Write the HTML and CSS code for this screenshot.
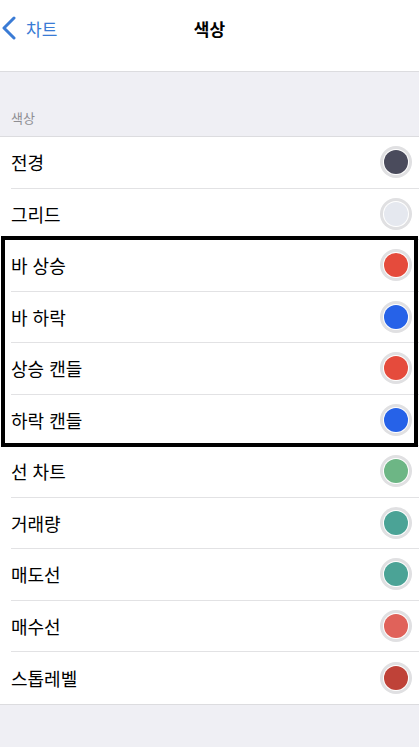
FILE: index.html
```html
<!DOCTYPE html>
<html lang="ko">
<head>
  <meta charset="UTF-8" />
  <meta name="viewport" content="width=device-width, initial-scale=1.0"/>
  <title>색상</title>
  <link rel="stylesheet" href="styles.css">
</head>
<body>
  <header class="navbar">
    <div class="nav-row">
      <a class="back-btn" href="#">
        <svg class="chevron" width="14" height="24" viewBox="0 0 14 24">
          <path d="M12 2 L2 12 L12 22" fill="none" stroke="#3a7bd5" stroke-width="3" stroke-linecap="round" stroke-linejoin="round"/>
        </svg>
        <span>차트</span>
      </a>
      <h1 class="title">색상</h1>
    </div>
  </header>

  <div class="section-label">색상</div>

  <ul class="list">
    <li class="row"><span>전경</span><i class="swatch" style="background:#4a4b5c"></i></li>
    <li class="row"><span>그리드</span><i class="swatch" style="background:#e5e8ef"></i></li>
    <li class="highlight">
      <ul class="list-group">
        <li class="row"><span>바 상승</span><i class="swatch" style="background:#e54b3c"></i></li>
        <li class="row"><span>바 하락</span><i class="swatch" style="background:#2662e8"></i></li>
        <li class="row"><span>상승 캔들</span><i class="swatch" style="background:#e54b3c"></i></li>
        <li class="row"><span>하락 캔들</span><i class="swatch" style="background:#2662e8"></i></li>
      </ul>
    </li>
    <li class="row"><span>선 차트</span><i class="swatch" style="background:#6db685"></i></li>
    <li class="row"><span>거래량</span><i class="swatch" style="background:#4ba396"></i></li>
    <li class="row"><span>매도선</span><i class="swatch" style="background:#4ba396"></i></li>
    <li class="row"><span>매수선</span><i class="swatch" style="background:#e0625a"></i></li>
    <li class="row"><span>스톱레벨</span><i class="swatch" style="background:#bf4238"></i></li>
  </ul>
</body>
</html>
```

FILE: styles.css
```css
body {
  margin: 0;
  background-color: #efeff4;
  font-family: "Noto Sans CJK KR", "Noto Sans", sans-serif;
  color: #000;
}

.navbar {
  background-color: #fff;
  height: 71px;
  border-bottom: 1px solid #dcdcdf;
}

.nav-row {
  position: relative;
  height: 56px;
  display: flex;
  align-items: center;
  justify-content: center;
}

.back-btn {
  position: absolute;
  left: 2px;
  top: 0;
  height: 56px;
  display: flex;
  align-items: center;
  gap: 10px;
  color: #3a7bd5;
  text-decoration: none;
  font-size: 17px;
}

.chevron {
  display: block;
}

.title {
  margin: 0;
  font-size: 17px;
  font-weight: 700;
}

.section-label {
  height: 64px;
  box-sizing: border-box;
  padding: 0 0 9px 11px;
  display: flex;
  align-items: flex-end;
  font-size: 13px;
  color: #8e8e93;
}

.list, .list-group {
  list-style: none;
  margin: 0;
  padding: 0;
}

.list {
  background-color: #fff;
  border-top: 1px solid #dcdcdf;
  border-bottom: 1px solid #dcdcdf;
}

.row {
  height: 51.5px;
  box-sizing: border-box;
  margin-left: 11px;
  padding-right: 11px;
  display: flex;
  align-items: center;
  justify-content: space-between;
  font-size: 18px;
  border-bottom: 1px solid #e2e2e4;
}

.list > .row:last-child {
  border-bottom: none;
}

.highlight {
  position: relative;
}

.highlight::after {
  content: "";
  position: absolute;
  top: -4px;
  bottom: -1px;
  left: 1px;
  right: 1px;
  border: 4px solid #000;
  pointer-events: none;
}

.swatch {
  display: block;
  width: 24px;
  height: 24px;
  border-radius: 50%;
  box-shadow: 0 0 0 1px #fff, 0 0 0 4px #e0e0e2;
}
```
